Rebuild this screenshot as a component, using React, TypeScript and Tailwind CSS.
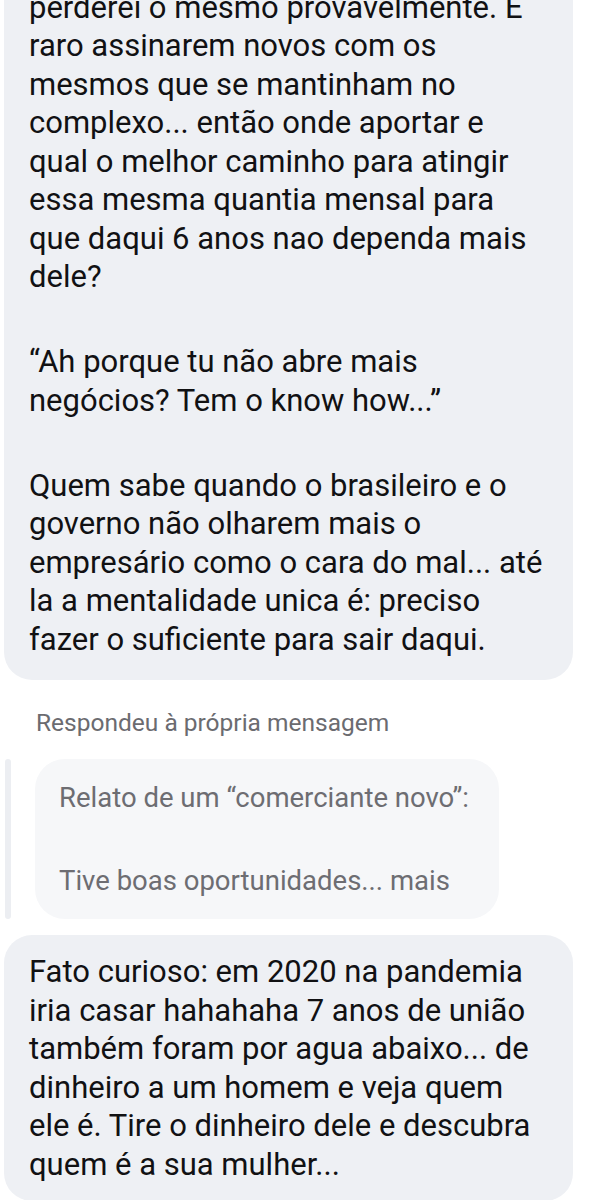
import React from "react";

const Lines = ({ lines }: { lines: string[] }) => (
  <p className="whitespace-nowrap">
    {lines.map((l, i) => (
      <React.Fragment key={i}>
        {l}
        {i < lines.length - 1 && <br />}
      </React.Fragment>
    ))}
  </p>
);

export default function App() {
  return (
    <div className="w-[614px] h-[1200px] overflow-hidden bg-white font-['Roboto','Noto_Sans',sans-serif] antialiased">
      <div className="ml-[4px] w-[569px] -mt-[30px] rounded-b-[28px] bg-[#eef0f4] pl-[25px] pt-[18.5px] pb-[21px] text-[31px] leading-[38.5px] text-[#111113]">
        <Lines
          lines={[
            "perderei o mesmo provavelmente. E",
            "raro assinarem novos com os",
            "mesmos que se mantinham no",
            "complexo... então onde aportar e",
            "qual o melhor caminho para atingir",
            "essa mesma quantia mensal para",
            "que daqui 6 anos nao dependa mais",
            "dele?",
          ]}
        />
        <div className="mt-[46.5px]">
          <Lines lines={["“Ah porque tu não abre mais", "negócios? Tem o know how...”"]} />
        </div>
        <div className="mt-[46.5px]">
          <Lines
            lines={[
              "Quem sabe quando o brasileiro e o",
              "governo não olharem mais o",
              "empresário como o cara do mal... até",
              "la a mentalidade unica é: preciso",
              "fazer o suficiente para sair daqui.",
            ]}
          />
        </div>
      </div>

      <div className="mt-[28.5px] pl-[36px] text-[24.5px] leading-[28px] text-[#6b6b70]">
        Respondeu à própria mensagem
      </div>

      <div className="mt-[22px] flex">
        <div className="ml-[5px] w-[6px] rounded-full bg-[#eceef2]" />
        <div className="ml-[24px] w-[464px] rounded-[30px] bg-[#f6f7f9] pl-[24px] pt-[21px] pb-[21px] text-[27.5px] leading-[35px] text-[#6d6d72]">
          <Lines lines={["Relato de um “comerciante novo”:"]} />
          <div className="mt-[48px]">
            <Lines lines={["Tive boas oportunidades... mais"]} />
          </div>
        </div>
      </div>

      <div className="mt-[16px] ml-[4px] w-[569px] rounded-[28px] bg-[#eef0f4] pl-[25px] pt-[18.5px] pb-[17px] text-[31px] leading-[38.5px] text-[#111113]">
        <Lines
          lines={[
            "Fato curioso: em 2020 na pandemia",
            "iria casar hahahaha 7 anos de união",
            "também foram por agua abaixo... de",
            "dinheiro a um homem e veja quem",
            "ele é. Tire o dinheiro dele e descubra",
            "quem é a sua mulher...",
          ]}
        />
      </div>
    </div>
  );
}
